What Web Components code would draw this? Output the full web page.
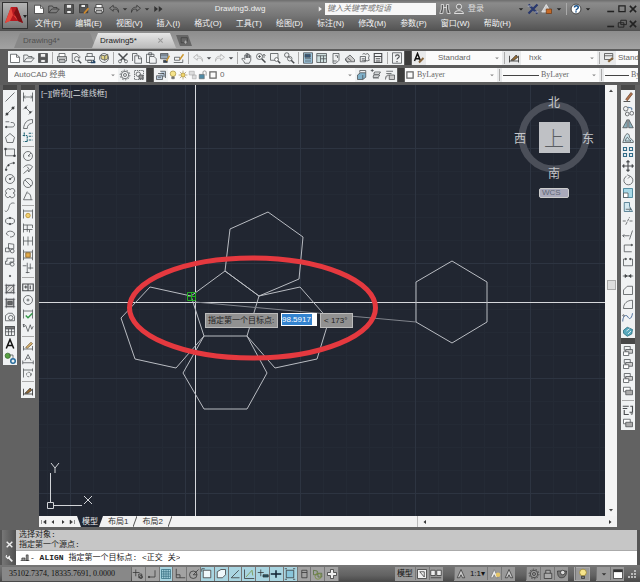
<!DOCTYPE html>
<html lang="zh-CN">
<head>
<meta charset="utf-8">
<title>Drawing5.dwg</title>
<style>
html,body{margin:0;height:100%}
body{font-family:"Liberation Sans","Noto Sans CJK SC",sans-serif;font-size:8px;line-height:12px;color:#333;background:#5d5d5d;overflow:hidden}
</style>
</head>
<body>
<cad-app></cad-app>
<script>
const ICONS = {
  new:'<path d="M2 3h8l4 4v7H2z" fill="#fff"/><path d="M10 3v4h4"/>',
  open:'<path d="M1 13V4h5l1 2h5v2M1 13l4-5h10l-4 5z"/>',
  save:'<path d="M2 2h12v12H2z" fill="#555"/><path d="M4.500 2h7v5h-7zM5 10h6v4H5z" fill="#eee"/>',
  saveas:'<path d="M2 2h11v11H2z" fill="#555"/><path d="M4 2h6v4H4z" fill="#eee"/><path d="M8 14l6-7" stroke="#d08a2c" stroke-width="2.500"/>',
  print:'<path d="M4 6V2h8v4M2 6h12v6H2zM4 10h8v4H4z" fill="#fff"/><path d="M2 8h12"/>',
  preview:'<path d="M3 14V2h6l4 4v2M3 14h3"/><circle cx="9" cy="9" r="3"/><path d="M11 11l4 4" stroke-width="2"/>',
  publish:'<path d="M4 6V2h7v4M2 6h12v5H2z"/><path d="M5 11h5v3H5z"/><path d="M9 14h6M12 11l3 3" stroke="#246" stroke-width="2"/>',
  print3d:'<circle cx="8" cy="8" r="6"/><path d="M4 4l5 1v6l-5-2zM9 5l4-2v6l-4 2" fill="#e2d48a"/>',
  cut:'<path d="M2 2l9 9M14 2L5 11" stroke-width="2"/><circle cx="4" cy="12.500" r="2"/><circle cx="12" cy="12.500" r="2"/>',
  copy:'<path d="M2 12V2h6v2M5 5h6l3 3v7H5z"/><path d="M10 5v4h4"/>',
  paste:'<path d="M2 3h10v3M2 3v11h4M5 1h4v3H5zM6 6h6l3 3v6H6z"/>',
  match:'<path d="M2 2h10v7H2zM2 4h10" fill="#9ab"/><path d="M6 11h5v3H6z" fill="#345"/><path d="M10 12l4-7" stroke="#c93" stroke-width="2"/>',
  bedit:'<path d="M2 7h7v4H2zM1 14h12M13 10v4"/><path d="M9 10l5-7" stroke="#c93" stroke-width="2"/>',
  undo:'<path d="M7 3L2 7l5 4V8.500c4-1 6 0 7 4 0-5-2-7-7-7z"/>',
  redo:'<path d="M9 3l5 4-5 4V8.500c-4-1-6 0-7 4 0-5 2-7 7-7z"/>',
  pan:'<path d="M5 15c-1-3-3-4-4-6l2-1 2 2V4h2v4-6h2v6-5h2v5-3h2v6l-2 4z"/>',
  zoomrt:'<circle cx="6" cy="6" r="4"/><path d="M9 9l5 5" stroke-width="2"/><path d="M4 6h4M6 4v4M12 3v5M10 5l2-2 2 2"/>',
  zoomwin:'<path d="M2 2h10v9H2z"/><circle cx="10" cy="10" r="2.500" fill="#fff"/><path d="M12 12l3 3" stroke-width="2"/>',
  zoomprev:'<circle cx="5" cy="4" r="3"/><path d="M7 6l3 3"/><circle cx="9" cy="9" r="3"/><path d="M11 11l4 4" stroke-width="2"/>',
  props:'<path d="M2 1h12v14H2z" fill="#9cc5dd"/><path d="M4 3h7v4H4z" fill="#357"/><path d="M4 9h8M4 12h8"/>',
  dc:'<path d="M1 2h13v12H1zM1 5h13M6 5v9M6 9h8M10 5v9" fill="#cdd"/>',
  palette:'<path d="M4 2h8v9l-4 4H4zM7 5h3v3M4 12h5"/>',
  sheet:'<path d="M2 9l6-5 6 6v3H4zM2 9v2l4 4M5 8l5 4" fill="#ccc"/>',
  markup:'<path d="M3 6h7v7H3z"/><path d="M6 3l2-1 2 1 3-1 2 3-1 3 1 3-3 1-2-1-2 1" /><path d="M5 9h4M5 11h4"/>',
  calc:'<path d="M3 2h10v12H3zM3 6h10M5 9h6M5 12h6" stroke-width="1.500"/>',
  help:'<path d="M2 1h12v14H2z"/><path d="M6 6c0-3 5-3 5 0 0 2-3 2-3 4M8 12v1.500" stroke-width="1.500"/>',
  qhelp:'<circle cx="8" cy="8" r="6.500" fill="#fff"/><path d="M6 6c0-3 5-3 5 0 0 2-3 2-3 4M8 11v1.500" stroke="#17518a" stroke-width="2"/>',
  gear:'<circle cx="8" cy="8" r="2"/><circle cx="8" cy="8" r="5"/><circle cx="8" cy="8" r="6.500" stroke-dasharray="2 2"/>',
  wsave:'<path d="M2 2h12v12H2z" stroke-dasharray="2 1"/><circle cx="7" cy="7" r="3"/><path d="M8 8h5v5H8z" fill="#999"/>',
  layers:'<path d="M2 9h8v5H2zM4 6h8v5M7 3h7v9" fill="#bcd"/><path d="M4 11h4M9 6h3"/>',
  lprev:'<path d="M2 8l4-3h7v6l-4 3H2z" fill="#7fb0c9"/><path d="M5 5V2h8v3M9 8v6"/>',
  lstate:'<path d="M1 2h4M3 0v4"/><path d="M6 4h8l-2 3H5zM5 8h8l-2 3H4zM4 12h8"/>',
  lwalk:'<path d="M3 3h9M3 6h7M2 14c0-5 2-6 5-6M7 8h7v6H7z" fill="#ccc"/>',
  bulb:'<circle cx="8" cy="6" r="4.500" fill="#f6e48b" stroke="#9a8330"/><path d="M6 11h4v3H6z" fill="#777"/>',
  sun:'<circle cx="8" cy="8" r="3.500" fill="#f2d66b" stroke="#87712e"/><path d="M8 1v2M8 13v2M1 8h2M13 8h2M3 3l1.500 1.500M11.500 11.500L13 13M13 3l-1.500 1.500M4.500 11.500L3 13" stroke="#87712e"/>',
  freeze:'<path d="M2 2h8v6H2zM7 8h6v6H7z" stroke="#aaa" fill="#ddd"/>',
  lock:'<path d="M2 7h8v7H2z" fill="#4f8aa5"/><path d="M8 7V3c0-2 5-2 5 0v6"/>',
  sq:'<path d="M3 3h10v10H3z" stroke-width="2"/>',
  style:'<path d="M2 12L6 2l4 10M3.500 9h5" stroke="#111" stroke-width="2"/><path d="M8 14l6-6" stroke="#86643b" stroke-width="2.500"/>',
  dimstyle:'<path d="M2 5v9M14 5v9M2 12h12" stroke="#222"/><path d="M4 11l7-7 2 3-5 4z" fill="#986c32" stroke="#333"/>',
  tstyle:'<path d="M2 2h11v8H2zM2 5h11"/><path d="M7 13l6-5" stroke="#86643b" stroke-width="3"/>',
  line:'<path d="M2 14L14 2"/>',
  cline:'<path d="M2 14L14 2"/><circle cx="4" cy="12" r="1.500" fill="#222"/><circle cx="12" cy="4" r="1.500" fill="#222"/>',
  pline:'<path d="M2 5h5M2 12h9c4 0 4-6 0-6H9"/><circle cx="3" cy="12" r="1" fill="#222"/>',
  polygon:'<path d="M8 2l6 5-2 7H4L2 7z"/>', rect:'<path d="M2 4h12v9H2z"/><path d="M1 3h2v2H1zM13 12h2v2h-2z" fill="#222"/>',
  arc:'<path d="M2 14C3 8 7 4 13 4"/><circle cx="3" cy="13" r="1" fill="#222"/><circle cx="6" cy="7" r="1" fill="#222"/><circle cx="13" cy="4" r="1" fill="#222"/>',
  circle:'<circle cx="8" cy="8" r="6"/><circle cx="8" cy="8" r="1" fill="#222"/><path d="M8 8l4-3"/>',
  cloud:'<path d="M4 3c2-2 4-1 4 1 0-2 5-3 6 0 1 2 0 4-2 4 3 0 3 5 0 6-2 1-4 0-4-2 0 2-4 3-5 1-2-2-1-5 1-5-3 0-2-4 0-5z"/>',
  spline:'<path d="M1 13c3 3 5-2 6-6 1-4 4-5 7-4"/>', ellipse:'<ellipse cx="8" cy="8" rx="6" ry="4"/><circle cx="8" cy="4" r="1" fill="#222"/><circle cx="8" cy="12" r="1" fill="#222"/>',
  elarc:'<path d="M3 8c1-6 11-4 11 0 0 3-3 4-6 4M3 8l3 2"/>', insert:'<path d="M6 2l7 1v6H6zM2 8h5v5H2z"/><circle cx="11" cy="12" r="2.500"/>',
  block:'<path d="M4 3h9v5H8v3H2V7h2z"/><circle cx="11" cy="11" r="2.500"/>', point:'<circle cx="8" cy="8" r="1" fill="#222"/>',
  hatch:'<path d="M3 3h10v10H3z" fill="#ddd"/><path d="M3 8l5-5M3 13L13 3M8 13l5-5M1 3h14M3 1v14M13 1v14M1 13h14" stroke-width=".8"/>',
  gradient:'<path d="M3 3h10v10H3z" fill="#bbb"/><path d="M5 6h6v4H5z" fill="#666"/><path d="M1 3h14M3 1v14M13 1v14M1 13h14" stroke-width=".8"/>',
  region:'<path d="M2 13V6l4-3h5l3 4v6z"/><circle cx="9" cy="9" r="3"/>', table:'<path d="M2 2h12v12H2zM2 5h12M2 9h12M6 5v9M10 5v9"/><path d="M2 2h12v3H2z" fill="#777"/>',
  text:'<path d="M3 14L8 2l5 12M5 10h6" stroke="#111" stroke-width="2"/>', addsel:'<circle cx="5" cy="5" r="3.500" fill="#58a143" stroke="#376a2b"/><circle cx="12" cy="12" r="3" stroke="#256a9a" stroke-width="2"/><path d="M7 4h5v4"/>',
  dlin:'<path d="M2 2v12M14 2v12M2 8h12M4 6L2 8l2 2M12 6l2 2-2 2"/>', dali:'<path d="M4 4l8 8M2 7l5-5M9 14l5-5"/><circle cx="5" cy="5" r="1" fill="#222"/><circle cx="11" cy="11" r="1" fill="#222"/>',
  darc:'<path d="M2 14C3 6 7 2 14 2M7 14c0-4 2-6 6-7M2 14h5M14 2v5"/>', dord:'<path d="M3 2v5M1 6h6M9 3h5M9 7h5M7 7v7M7 14H2M9 12h5" stroke="#267" stroke-width="1.500" stroke-dasharray="3 1"/>',
  drad:'<circle cx="8" cy="8" r="6"/><path d="M8 8l4-4M8 8h3"/>', djog:'<path d="M2 6c4-5 10-4 12-1M2 14l6-5 1 3 5-7M7 5l3 4"/>',
  ddia:'<circle cx="8" cy="8" r="6"/><path d="M4 4l8 8"/>', dang:'<path d="M7 2L2 13h12M7 4c4 0 5 4 5 9"/>',
  quick:'<path d="M2 2v12M14 2v12M2 4h12"/><circle cx="8" cy="10" r="3" fill="#f0cf70" stroke="#b68c2c"/>',
  base:'<path d="M2 2v12M2 4h12v4M2 10h8v4M7 4v9M10 10h4"/>', cont:'<path d="M2 2v12M8 2v12M14 2v12M2 8h12"/>',
  space:'<path d="M2 1v14M14 1v14M2 4h12M2 12h12"/><path d="M5 5h6v6H5z" fill="#e1aa4a" stroke="#7b5a25"/>', dbreak:'<path d="M7 1v14M11 2v8M1 5h5M8 8h7M5 14h5"/>',
  tol:'<path d="M1 4h14v9H1zM8 4v9M3 8h4M5 6v4M11 6v5" stroke-width="1.500"/>', center:'<circle cx="8" cy="8" r="6"/><path d="M8 6v4M6 8h4"/>',
  inspect:'<path d="M2 2v12M14 2v12M2 4h12"/><path d="M5 10l3 3 6-6" stroke="#36994b" stroke-width="2"/>', jogl:'<path d="M1 5h3M2 4v4l3-2 3 8 3-9 2 6 2-4"/>',
  dedit:'<path d="M2 8v6M14 8v6M2 12h12"/><path d="M5 10l7-7 2 2-7 6z" fill="#e1bb75" stroke="#6c532d"/>', dtext:'<path d="M1 10v5M15 10v5M1 13h14"/><path d="M4 10l4-8 4 8M6 7h4"/>',
  dupd:'<path d="M2 2v12M2 4h12M14 2v4"/><circle cx="9" cy="10" r="3" stroke-dasharray="3 1"/><path d="M12 8v3"/>',
  erase:'<path d="M2 14h9" stroke="#222"/><path d="M5 11l7-9 2 2-7 9z" fill="#b4734b" stroke="#69442d"/>', copyo:'<circle cx="5" cy="5" r="3"/><circle cx="7" cy="12" r="2.500"/><circle cx="13" cy="11" r="2.500"/><path d="M8 3l5 1v3" stroke="#258"/>',
  mirror:'<path d="M7 2v11H1zM9 2v11h6z" fill="#8cb1bd"/>', offset:'<path d="M1 14l2-6c3-9 7-6 7-1l5 5v2z" fill="#cce5ec"/><path d="M4 12l2-4c2-3 2 2 6 4z"/>',
  array:'<path d="M2 2h4v4H2zM10 2h4v4h-4zM2 10h4v4H2zM10 10h4v4h-4z" stroke="#326d89" stroke-width="1.500"/>', move:'<path d="M8 1v14M1 8h14M6 3l2-2 2 2M6 13l2 2 2-2M3 6L1 8l2 2M13 6l2 2-2 2" stroke-width="1.500"/>',
  rotate:'<path d="M11 3a6 6 0 1 1-5 0M7 1l4 2-3 3"/>', scale:'<path d="M2 2h12v12H2z" fill="#a7d8e6" stroke="#2d7289"/><path d="M2 8h6v6H2z" fill="#fff"/>',
  stretch:'<path d="M3 2h7v5l4 7H3z" fill="#d3e8ef" stroke="#36667c"/><path d="M5 11h7M10 9l2 2-2 2"/>', trim:'<path d="M1 8h5M10 8h5M5 13l5-10" stroke-dasharray="4 1"/>',
  extend:'<path d="M1 9h9M10 14l4-12M3 7L1 9l2 2"/>', breakp:'<path d="M12 4H3v9h10"/><circle cx="13" cy="4" r="1" fill="#222"/>', break:'<path d="M5 4H2v9h12V4h-3"/><circle cx="5" cy="4" r="1" fill="#222"/><circle cx="11" cy="4" r="1" fill="#222"/>',
  join:'<path d="M1 8h14M4 6l3 2-3 2zM12 6L9 8l3 2z" fill="#333"/>', chamfer:'<path d="M2 14V8l5-5h7v11z"/>', fillet:'<path d="M2 14c0-7 5-11 12-11v11z"/>',
  blend:'<path d="M1 14C1 6 6 4 8 8s5 2 6-5" stroke="#264e86"/><circle cx="2" cy="6" r="1"/>', explode:'<path d="M2 7l5-4 7 3-1 6-6 3-5-4z" fill="#58a9bd" stroke="#226677"/><path d="M6 8l4-3M8 12l4-4" stroke="#fff"/>',
  order:'<path d="M3 2h8v5H3z"/><path d="M5 6h9v5H5z" fill="#ccc"/><path d="M2 9h7v5H2z" fill="#fff"/>', order2:'<path d="M2 3h9v6H2z" fill="#fff"/><path d="M5 7h9v6H5z" fill="#aaa"/>',
  ordert:'<path d="M1 3h8M1 6h6M11 3h3v8h-4M3 8v6h6" stroke-width="1.500"/><circle cx="13" cy="13" r="1"/>',
  infer:'<path d="M5 2v9M1 6h9M9 8h4v5H9z"/><circle cx="12" cy="12" r="2"/>', snap:'<path d="M12 3v9H3"/><circle cx="4" cy="12" r="1"/>', grid:'<path d="M2 2h12v12H2zM5 2v12M8 2v12M11 2v12M2 5h12M2 8h12M2 11h12" stroke="#376e80"/>',
  ortho:'<path d="M3 1v12h12M3 9h5v4"/>', polar:'<circle cx="7" cy="9" r="5"/><path d="M7 9l7-7M7 9h5"/>', osnap:'<path d="M3 3h10v10H3z" fill="#eef8fb"/><path d="M1 5V1h4"/>', osnap3:'<path d="M3 5l5-3h6v7l-4 4H3z" fill="#eef8fb"/>',
  track:'<path d="M13 3L3 13h11"/>', ducs:'<path d="M2 2v12h13"/><path d="M4 12l8-9 1 7" stroke="#76923b"/>', dyn:'<path d="M5 2v9M1 6h8M8 9h7v3H8z" fill="#256"/>', lwt:'<path d="M1 8h14M8 3v10" stroke="#123" stroke-width="2"/>',
  tpy:'<path d="M3 3h10v10H3z" fill="#89c5da"/><path d="M1 1h3M12 1h3M1 15h3M12 15h3"/>', qp:'<path d="M5 3h7v10H5zM5 6h7"/>', sc:'<path d="M2 3l5 1v5H2zM8 7h5v5H8z" stroke="#536d34"/><circle cx="8" cy="11" r="4" stroke="#778d3b"/>', plus:'<path d="M6 2h4v4h4v4h-4v4H6v-4H2V6h4z" fill="#eee"/>',
  newtab:'<path d="M2 3h11v9H2z"/><path d="M10 8v6M7 11h6" stroke="#ddd"/>',
  model:'<path d="M2 2h12v12H2z" fill="#eee"/><path d="M5 5h6v7z"/>', views:'<path d="M1 3h6v7H1zM9 3h6v7H9zM1 13h14" fill="#eee"/>',
  person:'<path d="M8 2L3 13h3l2-4 2 4h3z" fill="#ccc" stroke="#333"/>',
  ann:'<path d="M7 2L2 13h3l2-4 2 4h3z" fill="#eee" stroke="#777"/><circle cx="12" cy="9" r="3" fill="#e6c669" stroke="none"/>', lockp:'<path d="M3 7h10v7H3zM5 7V3h6v4" fill="#aaa"/>', iso:'<path d="M2 4h12c0 7-3 9-7 9S2 9 2 4z" fill="#777"/><circle cx="9" cy="6" r="3" fill="#ddd"/>',
  window:'<path d="M2 2h12v12H2z" fill="#fff"/><path d="M2 4h12" stroke-width="3"/>', bino:'<path d="M3 2h3v6l-1 6H1l2-6zM10 2h3v6l2 6h-4l-1-6zM6 6h4" fill="#555"/>', user:'<circle cx="8" cy="5" r="3.500" fill="#777" stroke="#fff"/><path d="M2 14c0-5 12-5 12 0z" fill="#777" stroke="#fff"/>',
  exchange:'<path d="M2 2l12 12M14 2L2 14" stroke="#29386d" stroke-width="3"/><path d="M1 4h5M10 12h5" stroke="#ddd"/>', a360:'<path d="M1 12L7 2l6 10z" fill="#ccc" stroke="#eee"/><path d="M7 8h7v6H7z" fill="#c66a27" stroke="#713c18"/>',
  min:'<path d="M2 12h11" stroke-width="2.500"/>', max:'<path d="M3 3h10v9H3z" stroke-width="2"/>', restore:'<path d="M6 2h9v7H6zM2 6h9v7H2z" stroke-width="1.500"/>', close:'<path d="M3 3l10 10M13 3L3 13" stroke-width="2.500"/>',
  wrench:'<path d="M5 5l8 8" stroke-width="3"/><path d="M3 2l-1 3 3 3 3-2V3" stroke-width="2"/>', cmd:'<path d="M1 12h14M3 12V8h5v4M10 12V3h3v9z" fill="#999"/>',
  dd:'<path d="M5 7h6l-3 3z" fill="currentColor" stroke="none"/>', left:'<path d="M10 4v8L5 8z" fill="currentColor" stroke="none"/>', right:'<path d="M6 4v8l5-4z" fill="currentColor" stroke="none"/>', first:'<path d="M3 4v8M12 4v8L7 8z" fill="currentColor"/>', last:'<path d="M13 4v8M4 4v8l5-4z" fill="currentColor"/>', up:'<path d="M4 10h8L8 5z" fill="currentColor" stroke="none"/>', down:'<path d="M4 6h8l-4 5z" fill="currentColor" stroke="none"/>', more:'<path d="M3 4v8l5-4zM9 4v8l5-4z" fill="currentColor" stroke="none"/>'
};
const svg = n => `<svg viewBox="0 0 16 16" fill="none" stroke="currentColor" aria-hidden="true">${ICONS[n] || ''}</svg>`;
function define(tag, css, html) {
  customElements.define(tag, class extends HTMLElement {
    constructor() { super(); this.attachShadow({mode: 'open'}); }
    connectedCallback() {
      const t = document.createElement('template');
      t.innerHTML = `<style>*{box-sizing:border-box}${css}</style>` + (typeof html === 'function' ? html(this) : html);
      this.shadowRoot.replaceChildren(t.content.cloneNode(true));
    }
  });
}
const tool = n => `<cad-tool icon="${n}"></cad-tool>`;
const tools = s => s.split(' ').map(n => n === '|' ? '<tool-sep></tool-sep>' : n[0] === '*' ? `<cad-tool class="on" icon="${n.slice(1)}"></cad-tool>` : n[0] === '~' ? `<cad-tool class="dim" icon="${n.slice(1)}"></cad-tool>` : n === 'dd' ? '<cad-tool class="dd" icon="dd"></cad-tool>' : tool(n)).join('');

define('cad-tool', `:host{display:flex;flex:0 0 14px;min-width:0;min-height:0;align-items:center;justify-content:center}
button{display:flex;align-items:center;justify-content:center;width:100%;height:100%;padding:0;border:0;background:none;color:inherit}
svg{flex:none;width:var(--icon,12px);height:var(--icon,12px)}`,
  el => `<button type="button" aria-label="${el.getAttribute('icon')}">${svg(el.getAttribute('icon'))}</button>`);
define('cad-icon', `:host{display:inline-flex;flex:none}svg{width:var(--icon,10px);height:var(--icon,10px)}`, el => svg(el.getAttribute('name')));
define('tool-sep', `:host{display:block;flex:0 0 var(--sep,5px)}i{display:block;width:var(--sw,1px);height:var(--sh,12px);margin:var(--sm,1px 2px);background:#aaa}`, '<i></i>');
define('tool-strip', `:host{display:flex;height:14px;background:#f0f2f3;color:#4a4d50;overflow:hidden}
:host([vertical]){flex-direction:column;width:14px;height:auto;--sep:4px;--sw:12px;--sh:1px;--sm:2px 1px}
:host([vertical]) ::slotted(cad-tool){flex:1 1 0}::slotted(.dd){flex:0 0 8px}::slotted(.dim){color:#aaa}`, '<slot></slot>');
define('cad-select', `:host{display:flex;align-items:center;flex:none;height:14px;background:#fbfbfb;color:#666;font-size:8px;position:relative}
select{appearance:none;flex:1;min-width:0;width:100%;height:14px;border:0;padding:0 12px 0 var(--pad,2px);margin:0;background:none;color:inherit;font:inherit}
svg{position:absolute;right:0;width:10px;height:10px;color:#888;pointer-events:none}`,
  el => `<slot></slot><select aria-label="${el.getAttribute('label')}"><option>${el.getAttribute('value')}</option></select>${svg('dd')}`);

define('title-bar', `:host{display:flex;height:31px;padding:0 2px;background:linear-gradient(#6d6d6d,#8b8b8b 10%,#777 50%,#555);color:#eee;border-bottom:1px solid #505050}
.logo{width:26px;height:27px;margin-top:2px;padding:0;border:1px solid #333;background:linear-gradient(#b5b5b5,#777);display:flex;align-items:center}
.logo svg{width:24px;height:24px}
.body{flex:1;min-width:0;display:flex;flex-direction:column}
.row{display:flex;align-items:center;height:18px}
.qat{display:flex;height:14px;margin-left:3px;color:#333}.qat cad-tool{flex-basis:15px}.qat .dd{flex-basis:7px}
h1{flex:1;min-width:0;margin:0;text-align:center;font:8px/12px "Liberation Sans",sans-serif;color:#f0f0f0}
input{width:111px;height:12px;border:0;padding:0 2px;background:#f7f7f7;font:italic 8px/12px "Liberation Sans","Noto Sans CJK SC",sans-serif;border-radius:0}
input::placeholder{color:#777}
.acct{display:flex;align-items:center;width:78px;margin-left:2px}.acct a{color:#ddd;text-decoration:none;margin-left:2px}
.sys{display:flex;align-items:center;color:#222}.sys>cad-tool{height:12px}.sys .dd{flex-basis:10px}.win{display:flex;margin-left:12px;color:#222;--icon:10px}.win cad-tool{flex-basis:11px;height:12px}
nav{display:flex;align-items:center;gap:14px;padding-left:7px;height:12px}nav a{color:#f3f3f3;text-decoration:none;white-space:nowrap}nav .win{margin-left:auto}`,
  `<button class="logo" aria-label="应用程序菜单"><svg viewBox="0 0 24 24"><path d="M2 19L8 3h6l6 16-5-2-9 0z" fill="#b71920"/><path d="M8 3L2 19l5-2 3-6zM10 11l4 2 1 4z" fill="#e8473c"/><path d="M14 3l6 16-5-2-4-8z" fill="#7f1014"/><path d="M20 11h4l-2 3z" fill="#222"/></svg></button>
<div class="body"><div class="row"><div class="qat">${tools('new open save saveas print undo dd redo dd more')}</div><h1>Drawing5.dwg</h1><cad-icon name="right"></cad-icon><input type="search" aria-label="搜索" placeholder="键入关键字或短语">
<div class="acct">${tools('bino user')}<a href="#">登录</a></div><div class="sys">${tools('dd exchange a360 dd | qhelp dd')}</div><div class="win">${tools('min max close')}</div></div>
<nav>${['文件(F)','编辑(E)','视图(V)','插入(I)','格式(O)','工具(T)','绘图(D)','标注(N)','修改(M)','参数(P)','窗口(W)','帮助(H)'].map(t => `<a href="#">${t}</a>`).join('')}<div class="win">${tools('min restore close')}</div></nav></div>`);

define('file-tabs', `:host{display:flex;align-items:flex-end;height:18px;padding:2px 0 1px 14px;background:linear-gradient(#8d8d8d,#a2a2a2)}
button{display:flex;align-items:center;height:15px;border:0;font:inherit;text-align:left;clip-path:polygon(0 100%,6px 0,calc(100% - 6px) 0,100% 100%)}
.t{width:82px;padding:0 9px;background:#888;color:#505050}.a{width:84px;margin-left:-4px;padding:0 12px 0 8px;background:linear-gradient(#e6e6e6,#bbb);color:#222;justify-content:space-between;--icon:7px}.a cad-icon{color:#999}.n{width:16px;height:11px;margin:0 0 2px;padding:0 4px;background:#666;color:#333;clip-path:polygon(0 0,12px 0,100% 100%,4px 100%);--icon:9px}`,
  `<button class="t">Drawing4*</button><button class="a"><span>Drawing5*</span><cad-icon name="close"></cad-icon></button><button class="n" aria-label="新建"><cad-icon name="newtab"></cad-icon></button>`);

define('tool-rows', `:host{display:grid;grid-template-columns:minmax(0,1fr);row-gap:3px;padding:2px 2px 3px 8px;background:#5c5c5c}
.row{display:flex;height:14px;overflow:hidden}.row>tool-strip,.row>.grip{flex:none}.grip{width:6px;margin:0 1px;background:#3c3c3c}.r{flex:1;min-width:0;display:flex;background:#e9eaeb;overflow:hidden}.r>cad-tool{color:#444}
.ws{width:110px;--pad:6px}.s1{width:76px;--pad:12px}.s2{width:76px;--pad:8px}.s3{width:76px;--pad:2px}.lay{width:187px;--pad:2px}
.col,.lt,.lw{font-family:"Liberation Serif",serif}.col{width:92px}.lt{width:97px}.lw{width:96px}.lt i,.lw i{flex:none;width:36px;height:1px;background:#444;margin-left:1px}.lw i{width:24px}`,
  `<div class="row"><tool-strip>${tools('new open save | print preview publish print3d | cut copy paste match bedit | ~undo dd ~redo dd | pan zoomrt zoomwin zoomprev | props dc palette sheet markup calc | help')}</tool-strip><div class="grip"></div><div class="r">${tool('style')}<cad-select class="s1" label="文字样式" value="Standard"></cad-select><tool-sep></tool-sep>${tool('dimstyle')}<cad-select class="s2" label="标注样式" value="hxk"></cad-select><tool-sep></tool-sep>${tool('tstyle')}<cad-select class="s3" label="表格样式" value="Standard"></cad-select></div></div>
<div class="row"><cad-select class="ws" label="工作空间" value="AutoCAD 经典"></cad-select><tool-strip>${tools('gear wsave')}</tool-strip><div class="grip"></div><tool-strip>${tool('layers')}</tool-strip><cad-select class="lay" label="图层" value="0">${['bulb','sun','freeze','lock','sq'].map(n => `<cad-icon name="${n}"></cad-icon>`).join('')}</cad-select><tool-strip>${tools('lprev lstate lwalk')}</tool-strip><div class="grip"></div><div class="r"><cad-select class="col" label="颜色" value="ByLayer"><cad-icon name="sq"></cad-icon></cad-select><tool-sep></tool-sep><cad-select class="lt" label="线型" value="ByLayer"><i></i></cad-select><tool-sep></tool-sep><cad-select class="lw" label="线宽" value="ByLayer"><i></i></cad-select></div></div>`);

define('view-cube', `:host{display:grid;width:76px;justify-items:center;row-gap:9px;color:#c4c6ca}.ring{position:relative;width:72px;height:84px;display:grid;place-items:center;font:12px/13px "Noto Sans CJK SC",sans-serif}
.ring svg{position:absolute;inset:0;width:72px;height:84px}.ring span{position:absolute}.n{top:0}.s{bottom:0}.w{left:-4px}.e{right:-4px}button{width:31px;height:31px;border:0;padding:0;background:#bfc1c5;color:#5a5d62;font:300 20px/29px "Noto Sans CJK SC",sans-serif;z-index:1}
.wcs{width:30px;height:10px;border:1px solid #ccc;border-radius:2px;background:#aab;color:#606775;font:8px/8px "Liberation Sans",sans-serif;text-align:left;padding-left:2px}`,
  `<div class="ring"><svg viewBox="0 0 72 84"><circle cx="36" cy="42" r="32" fill="none" stroke="#4b4f59" stroke-width="7"/></svg><span class="n">北</span><span class="s">南</span><span class="w">西</span><span class="e">东</span><button>上</button></div><button class="wcs">WCS</button>`);

define('dynamic-input', `:host{display:flex;gap:3px;font:8px/14px "Liberation Sans","Noto Sans CJK SC",sans-serif;color:#222}label,output{height:15px;border:1px solid #bbb;background:#919191;padding:0 2px;white-space:nowrap;line-height:13px}label{width:73px}output{width:33px;padding-left:3px}
.f{width:36px;height:13px;background:#fff;padding:1px 0 1px 1px;display:flex}input{width:30px;height:11px;border:0;padding:0;background:#3383cf;color:#fff;font:inherit}`,
  `<label for="d">指定第一个目标点:</label><div class="f"><input id="d" value="98.5917"></div><output>&lt; 173°</output>`);

define('drawing-canvas', `:host{display:block;position:relative;flex:1;min-width:0;background:#212631;overflow:hidden}svg{position:absolute;inset:0;width:100%;height:100%}
.vp{position:absolute;left:2px;top:3px;color:#d6d8db;font:8px/12px "Liberation Sans","Noto Sans CJK SC",sans-serif}view-cube{position:absolute;right:13px;top:10px}dynamic-input{position:absolute;left:166px;top:228px}`,
  `<svg fill="none"><defs><pattern id="g" width="115" height="115" patternUnits="userSpaceOnUse" x="31" y="63"><path d="M23.500 0v115M46.500 0v115M69.500 0v115M92.500 0v115M0 23.500h115M0 46.500h115M0 69.500h115M0 92.500h115" stroke="#242a35"/><path d="M.5 0v115M0 .5h115" stroke="#2d3441"/></pattern></defs><rect width="100%" height="100%" fill="url(#g)"/>
<line x1="0" x2="100%" y1="217.500" y2="217.500" stroke="#d6d8dc"/><line x1="156.500" x2="156.500" y1="0" y2="100%" stroke="#d6d8dc"/>
<g transform="translate(-39 -85)"><g stroke="#b9bcc2"><path d="M268 212l35 25-4 42-40 17-34-25 5-42zM225 271l34 25-12 40h-43l-13-40zM191 296l-41-9-29 31 14 41 41 9 28-32M204 336l-21 37 21 36h43l20-36-20-37M259 296l41-9 29 33-12 39-42 9-28-32M452 261l35 21v40l-35 21-36-21v-40z"/><path d="M195 302L416 322" stroke="#80848c"/></g>
<ellipse cx="252.500" cy="308" rx="123" ry="50" stroke="#e5393f" stroke-width="5"/><path d="M187.500 292.500h8v8h-8zM191.500 292v8M188 296.500h7" stroke="#24ad24"/></g></svg>
<svg viewBox="0 0 566 431" preserveAspectRatio="xMinYMax meet" fill="none" stroke="#d2d4d8"><path d="M11.500 388v29M15 420.500h28M8.500 417.500h6v6h-6zM12 378l4 5 4-5M16 383v5M45 411l8 8M53 411l-8 8"/></svg>
<span class="vp">[−][俯视][二维线框]</span><view-cube></view-cube><dynamic-input></dynamic-input>`);

define('layout-tabs', `:host{display:flex;height:11px;background:#f2f2f2;color:#333;line-height:11px}.nav{display:flex;width:38px}.nav cad-tool{flex:1;height:11px;--icon:8px}button{border:0;padding:0 5px;height:11px;background:none;color:#333;font:8px/11px "Liberation Sans","Noto Sans CJK SC",sans-serif}button.a{background:#212631;color:#eee;clip-path:polygon(0 0,100% 0,calc(100% - 4px) 100%,4px 100%)}svg{width:4px;height:11px;flex:none}.l cad-tool{height:11px;--icon:8px}.l{margin-left:auto;width:200px;display:flex;justify-content:space-between;border-left:1px solid #bbb}`,
  `<div class="nav">${tools('first left right last')}</div><button class="a">模型</button><button>布局1</button><svg viewBox="0 0 4 11" stroke="#555"><path d="M4 0L0 11"/></svg><button>布局2</button><svg viewBox="0 0 4 11" stroke="#555"><path d="M4 0L0 11"/></svg><div class="l">${tools('left right')}</div>`);

define('cad-work', `:host{display:flex;flex:1;min-height:0;padding:0 3px 3px;background:#626262}.dock{flex:none;width:18px;display:flex;flex-direction:column;align-items:flex-start}.grip{width:14px;height:5px;background:#474747;flex:none}.grip.g2{height:6px}.d1 .m{height:275px}.d2 .m{height:308px}.dr{width:14px;margin-left:4px;margin-right:2px}.dr .m{height:248px}.dr .o{height:86px}
.mid{flex:1;min-width:0;display:flex;flex-direction:column}.v{flex:1;min-height:0;display:flex}.sb{width:12px;background:#f4f4f4;display:flex;flex-direction:column;align-items:center;justify-content:space-between;color:#444}.sb cad-tool{flex-basis:12px;--icon:8px}.thumb{width:9px;height:10px;border:1px solid #aaa;background:#ddd;margin-bottom:32px}`,
  `<div class="dock d1"><div class="grip"></div><tool-strip vertical class="m">${tools('line cline pline polygon rect arc circle cloud spline ellipse elarc insert block point hatch gradient region table text addsel')}</tool-strip></div>
<div class="dock d2"><div class="grip"></div><tool-strip vertical class="m">${tools('dlin dali darc dord | drad djog ddia dang | quick base cont space dbreak | tol center inspect jogl | dedit dtext dupd | dimstyle')}</tool-strip></div>
<div class="mid"><div class="v"><drawing-canvas></drawing-canvas><div class="sb">${tool('up')}<div class="thumb"></div>${tool('down')}</div></div><layout-tabs></layout-tabs></div>
<div class="dock dr"><div class="grip"></div><tool-strip vertical class="m">${tools('erase copyo mirror offset array move rotate scale stretch trim extend breakp break join chamfer fillet blend explode')}</tool-strip><div class="grip g2"></div><tool-strip vertical class="o">${tools('order order order order2 | ordert order2')}</tool-strip></div>`);

define('command-line', `:host{display:flex;padding:0 3px 0 2px;background:#555;font:8px/10px "Liberation Mono","Noto Sans CJK SC",monospace;color:#222}.s{width:14px;background:linear-gradient(90deg,#777,#505050);color:#eee;display:flex;flex-direction:column;padding-top:7px;--icon:9px}.s cad-tool{flex:0 0 14px}.b{flex:1;min-width:0}.h{height:21px;background:#c6c6c6;padding-left:3px;border-bottom:1px solid #aaa}p{margin:0}.c{display:flex;align-items:center;height:14px;background:#fff;padding-left:4px;white-space:pre}input{flex:1;min-width:0;border:0;padding:0;height:12px;outline:0}b{font-weight:bold}`,
  `<div class="s">${tools('close wrench')}</div><div class="b"><div class="h"><p>选择对象:</p><p>指定第一个源点:</p></div><div class="c"><cad-icon name="cmd"></cad-icon><label for="c">- <b>ALIGN</b> 指定第一个目标点: &lt;正交 关&gt;</label><input id="c"></div></div>`);

define('status-bar', `:host{display:flex;align-items:center;height:17px;padding:0 3px 0 2px;background:linear-gradient(#777,#626262 60%,#484848);color:#333}
.xy{width:129px;height:14px;padding-left:7px;background:#888;color:#111;font:8px/14px "Liberation Serif",serif;white-space:nowrap}.t{display:flex;width:207px;height:14px;margin-left:1px}.t cad-tool{flex:1 1 0;background:#a2a2a2;border-right:1px solid #777}.t .on{background:#a9d5e1}
.r{margin-left:auto;display:flex;align-items:center}.g{display:flex;align-items:center;height:14px;background:#999}.g+.g{margin-left:11px}.g cad-tool{height:13px;border-left:1px solid #777}.g button{border:0;background:none;padding:0 2px;height:14px;font:8px/14px "Liberation Sans","Noto Sans CJK SC",sans-serif;color:#111}.g+.g.k{margin-left:6px}.lamp{border:1px solid #aaa}.x{color:#bbb;width:12px;height:12px;margin-left:1px}`,
  `<div class="xy">35102.7374, 18335.7691, 0.0000</div><div class="t">${tools('infer snap *grid ortho polar *osnap *osnap3 *track *ducs *dyn *lwt *tpy qp sc plus')}</div>
<div class="r"><div class="g"><button>模型</button>${tools('model views')}</div><div class="g">${tool('person')}<button>1:1▾</button>${tools('ann person')}</div><div class="g">${tools('gear lockp iso')}</div><div class="g k lamp">${tool('bulb')}</div><div class="g k">${tools('dd window')}</div><svg class="x" viewBox="0 0 12 12" fill="currentColor"><path d="M9 2h2v2H9zM9 5h2v2H9zM9 8h2v2H9zM6 5h2v2H6zM6 8h2v2H6zM3 8h2v2H3z"/></svg></div>`);

define('cad-app', `:host{display:flex;flex-direction:column;min-height:100vh;background:#555}`,
  `<title-bar></title-bar><file-tabs></file-tabs><tool-rows></tool-rows><cad-work></cad-work><command-line></command-line><status-bar></status-bar>`);
</script>
</body>
</html>
